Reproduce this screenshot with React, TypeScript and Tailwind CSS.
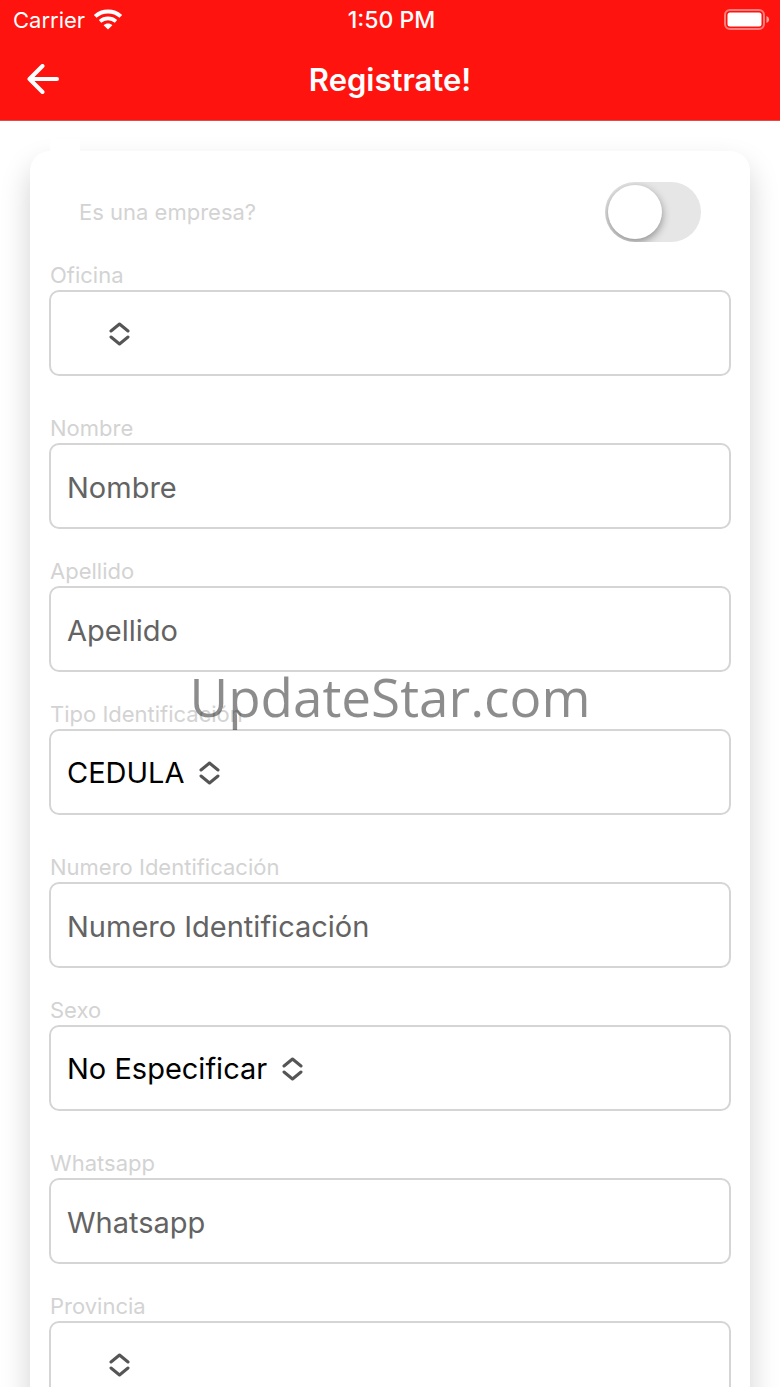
import { useState } from 'react';

interface Field {
  id: string;
  label: string;
  kind: 'text' | 'select';
  options?: string[];
}

const FIELDS: Field[] = [
  { id: 'oficina', label: 'Oficina', kind: 'select', options: [''] },
  { id: 'nombre', label: 'Nombre', kind: 'text' },
  { id: 'apellido', label: 'Apellido', kind: 'text' },
  { id: 'tipo-identificacion', label: 'Tipo Identificación', kind: 'select', options: ['CEDULA'] },
  { id: 'numero-identificacion', label: 'Numero Identificación', kind: 'text' },
  { id: 'sexo', label: 'Sexo', kind: 'select', options: ['No Especificar'] },
  { id: 'whatsapp', label: 'Whatsapp', kind: 'text' },
  { id: 'provincia', label: 'Provincia', kind: 'select', options: [''] },
];

function WifiIcon() {
  return (
    <svg width="30" height="22" viewBox="0 0 30 22" fill="none" stroke="white" aria-hidden="true">
      <path d="M2.2 7.4C9.4 0.8 20.6 0.8 27.8 7.4" strokeWidth="4" />
      <path d="M7 12.4C11.6 8.4 18.4 8.4 23 12.4" strokeWidth="3.6" />
      <path d="M10.6 16.2C13.2 13.8 16.8 13.8 19.4 16.2L15 20.6Z" fill="white" stroke="none" />
    </svg>
  );
}

function BatteryIcon() {
  return (
    <svg width="46" height="22" viewBox="0 0 46 22" fill="none" aria-hidden="true">
      <rect x="1" y="1" width="39" height="19" rx="5" stroke="white" strokeOpacity="0.45" strokeWidth="2" />
      <rect x="3.5" y="3.5" width="34" height="14" rx="2.5" fill="white" />
      <path d="M42.5 7C46 8.4 46 12.6 42.5 14Z" fill="white" fillOpacity="0.6" />
    </svg>
  );
}

function BackIcon() {
  return (
    <svg
      width="34"
      height="32"
      viewBox="0 0 34 32"
      fill="none"
      stroke="white"
      strokeWidth="4"
      strokeLinecap="round"
      strokeLinejoin="round"
      aria-hidden="true"
    >
      <path d="M16.5 2L3.5 15L16.5 28M3.5 15H31" />
    </svg>
  );
}

function UpDownIcon() {
  return (
    <svg
      width="21"
      height="24"
      viewBox="0 0 21 24"
      fill="none"
      stroke="#555555"
      strokeWidth="3"
      strokeLinecap="round"
      strokeLinejoin="round"
      className="pointer-events-none shrink-0"
      aria-hidden="true"
    >
      <path d="M2 9L10.5 2L19 9M2 15L10.5 22L19 15" />
    </svg>
  );
}

function SelectBox({ id, options = [] }: { id: string; options?: string[] }) {
  return (
    <div className="flex h-[86px] items-center gap-3.5 rounded-[10px] border-2 border-[#d5d5d5] px-4 pt-0.5">
      <select id={id} className="min-w-7 appearance-none bg-transparent text-[29px] text-black outline-none">
        {options.map((option) => (
          <option key={option}>{option}</option>
        ))}
      </select>
      <UpDownIcon />
    </div>
  );
}

function FormField({ field }: { field: Field }) {
  return (
    <div className={field.kind === 'select' ? 'mb-[39px]' : 'mb-[29px]'}>
      <label htmlFor={field.id} className="block h-7 px-px text-[22px] leading-[26px] text-[#d3d3d3]">
        {field.label}
      </label>
      {field.kind === 'select' ? (
        <SelectBox id={field.id} options={field.options} />
      ) : (
        <input
          id={field.id}
          type="text"
          placeholder={field.label}
          className="block h-[86px] w-full rounded-[10px] border-2 border-[#d5d5d5] px-4 pt-0.5 text-[29px] text-black outline-none placeholder:text-[#636363]"
        />
      )}
    </div>
  );
}

export default function App() {
  const [isCompany, setIsCompany] = useState(false);

  return (
    <div className="flex h-screen flex-col bg-white font-['Inter',sans-serif]">
      <header className="shrink-0 border-b border-[#d8504c] bg-[#ff130f] text-white">
        <div className="grid h-10 grid-cols-3 items-center pr-2.5 pl-[13px]">
          <div className="flex items-center gap-2 text-[22px]">
            Carrier
            <WifiIcon />
          </div>
          <div className="text-center text-[23px] font-medium">1:50 PM</div>
          <div className="flex justify-end">
            <BatteryIcon />
          </div>
        </div>
        <div className="grid h-20 grid-cols-[60px_1fr_60px] items-center px-[26px]">
          <button type="button" aria-label="Volver">
            <BackIcon />
          </button>
          <h1 className="text-center text-[31px] font-semibold">Registrate!</h1>
        </div>
      </header>

      <main className="min-h-0 flex-1 overflow-y-auto px-[30px] pt-[30px] [scrollbar-width:none]">
        <form className="relative rounded-[20px] bg-white px-[19px] pt-[31px] pb-5 shadow-[0_15px_30px_rgba(0,0,0,0.18)]">
          {/* blank legend tab sitting on the top edge */}
          <div className="absolute -top-3 left-5 h-3 w-[30px] bg-white" />
          <div className="mb-5 flex h-15 items-center justify-between px-[30px]">
            <label htmlFor="empresa" className="text-[22px] text-[#d3d3d3]">
              Es una empresa?
            </label>
            <input
              id="empresa"
              type="checkbox"
              role="switch"
              checked={isCompany}
              onChange={(e) => setIsCompany(e.target.checked)}
              className="
                h-15 w-24 appearance-none rounded-full bg-[#e6e6e6] p-[3px]
                before:block before:size-[54px] before:rounded-full before:bg-white
                before:shadow-[0_3px_8px_rgba(0,0,0,0.4)] before:transition-transform
                overflow-hidden checked:bg-[#34c759] checked:before:translate-x-9
              "
            />
          </div>
          {FIELDS.map((field) => (
            <FormField key={field.id} field={field} />
          ))}
        </form>
      </main>

      <div className="pointer-events-none fixed inset-0 flex items-center justify-center pt-1.5 font-['Open_Sans',sans-serif] text-[53px] text-black/45">
        UpdateStar.com
      </div>
    </div>
  );
}
